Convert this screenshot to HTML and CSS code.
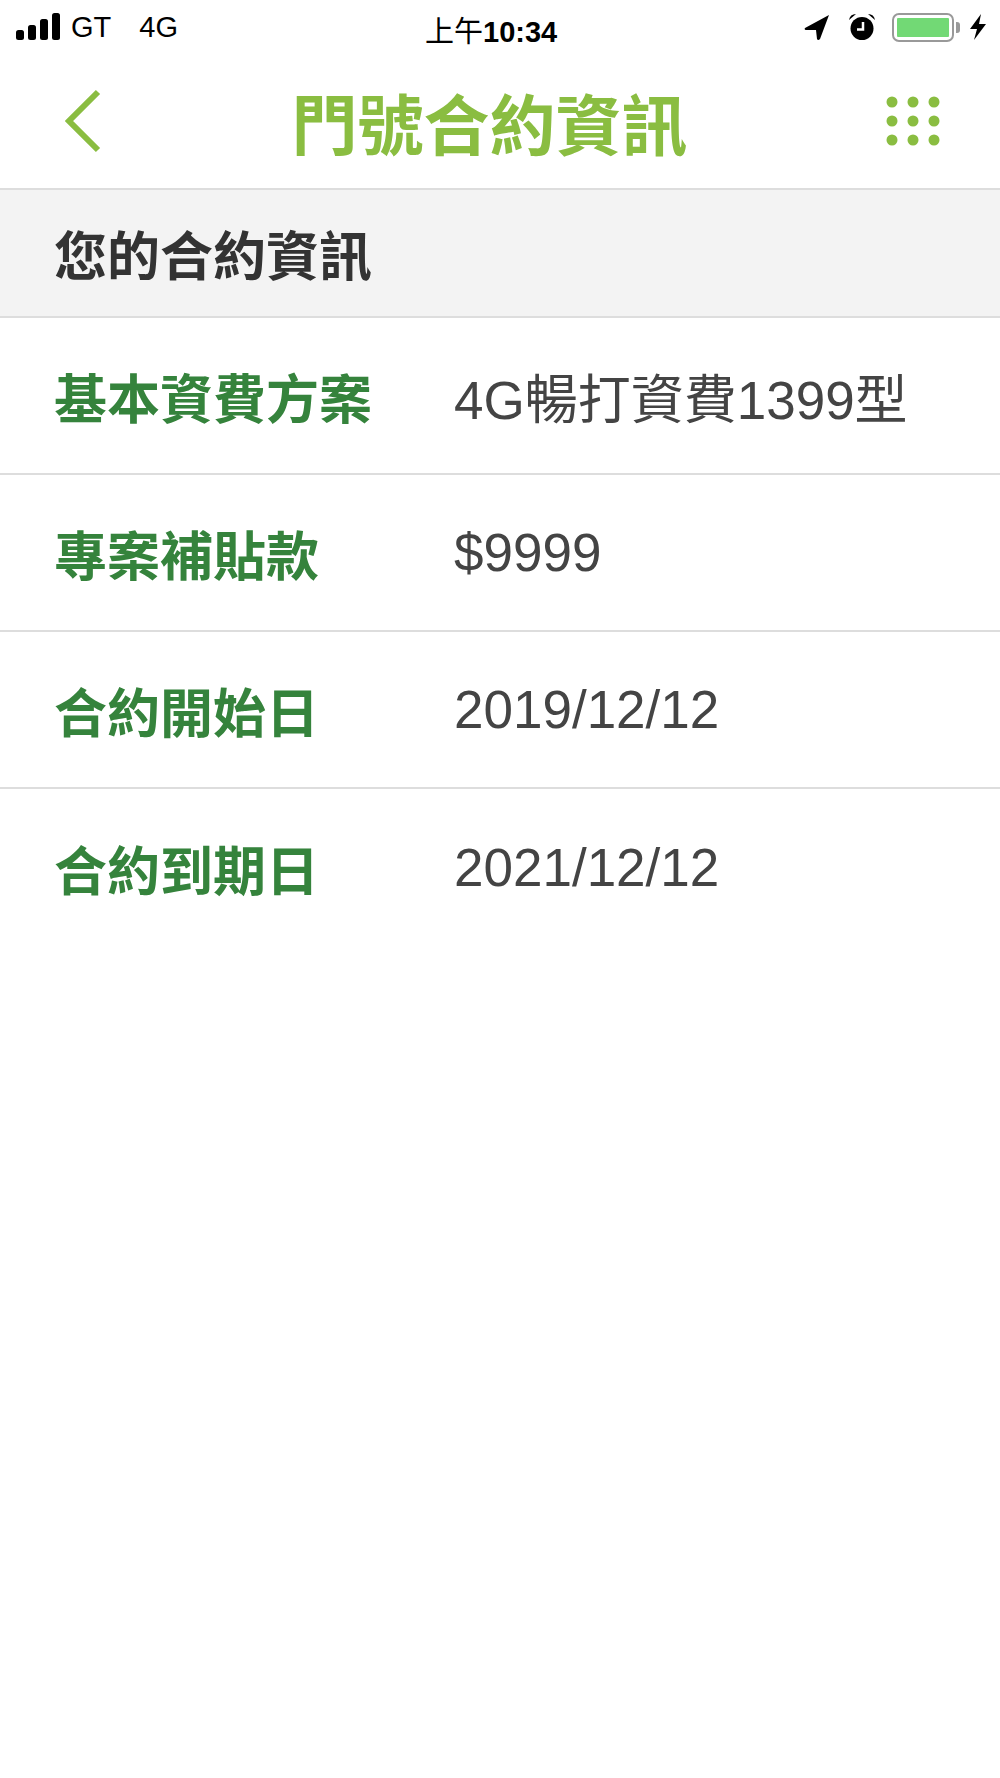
FILE: index.html
```html
<!DOCTYPE html>
<html lang="zh-TW">
<head>
  <meta charset="UTF-8">
  <title>門號合約資訊</title>
  <link rel="stylesheet" href="styles.css">
</head>
<body>

<div class="status-bar">
  <div class="status-left">
    <svg class="signal" width="46" height="28" viewBox="0 0 46 28">
      <rect x="0" y="17" width="8" height="10" rx="2.5"/>
      <rect x="12" y="12" width="8" height="15" rx="2.5"/>
      <rect x="24" y="6" width="8" height="21" rx="2.5"/>
      <rect x="36" y="0" width="8" height="27" rx="2.5"/>
    </svg>
    <span class="carrier">GT</span>
    <span class="network">4G</span>
  </div>
  <div class="status-time">上午<b>10:34</b></div>
  <div class="status-right">
    <svg width="26" height="26" viewBox="0 0 26 26">
      <path d="M25 1 L1 14 Q0 16 2 16 L12 16 L13 25 Q14 27 16 25 Z"/>
    </svg>
    <svg class="alarm" width="28" height="28" viewBox="0 0 28 28">
      <circle cx="14" cy="15.5" r="11.5"/>
      <path d="M1 7 Q2 1 8 1 Z M27 7 Q26 1 20 1 Z"/>
      <path class="hands" d="M15 9 V16.5 H9"/>
    </svg>
    <div class="battery">
      <div class="battery-body"><div class="battery-fill"></div></div>
      <div class="battery-cap"></div>
    </div>
    <svg width="16" height="26" viewBox="0 0 16 26">
      <path d="M11 0 L0 15 H7 L4 26 L16 10 H9 Z"/>
    </svg>
  </div>
</div>

<div class="nav-bar">
  <svg class="back" width="36" height="64" viewBox="0 0 36 64">
    <path d="M33 3 L4 32 L33 61"/>
  </svg>
  <h1>門號合約資訊</h1>
  <svg class="grid" width="56" height="50" viewBox="0 0 56 50">
    <circle cx="6" cy="6" r="5.5"/><circle cx="27" cy="6" r="5.5"/><circle cx="48" cy="6" r="5.5"/>
    <circle cx="6" cy="25" r="5.5"/><circle cx="27" cy="25" r="5.5"/><circle cx="48" cy="25" r="5.5"/>
    <circle cx="6" cy="44" r="5.5"/><circle cx="27" cy="44" r="5.5"/><circle cx="48" cy="44" r="5.5"/>
  </svg>
</div>

<div class="section-title">您的合約資訊</div>

<div class="info-row">
  <div class="info-label">基本資費方案</div>
  <div class="info-value">4G暢打資費1399型</div>
</div>
<div class="info-row">
  <div class="info-label">專案補貼款</div>
  <div class="info-value">$9999</div>
</div>
<div class="info-row">
  <div class="info-label">合約開始日</div>
  <div class="info-value">2019/12/12</div>
</div>
<div class="info-row no-border">
  <div class="info-label">合約到期日</div>
  <div class="info-value">2021/12/12</div>
</div>

</body>
</html>
```

FILE: styles.css
```css
body {
  margin: 0;
  background: #fff;
  font-family: 'Liberation Sans', 'Noto Sans CJK TC', sans-serif;
  color: #444;
}
.status-bar {
  height: 54px;
  display: flex;
  align-items: center;
  justify-content: space-between;
  padding: 0 14px 0 16px;
  color: #000;
  position: relative;
}
.status-left {
  display: flex;
  align-items: center;
  font-size: 29px;
}
.carrier {
  margin-left: 9px;
}
.network {
  margin-left: 28px;
}
.status-time {
  font-size: 29px;
  position: absolute;
  left: 425px;
  top: 8px;
}
.status-right {
  display: flex;
  align-items: center;
}
.alarm {
  margin-left: 18px;
}
.hands {
  fill: none;
  stroke: #fff;
  stroke-width: 2.5;
}
.battery {
  display: flex;
  align-items: center;
  margin-left: 16px;
  margin-right: 10px;
}
.battery-body {
  width: 62px;
  height: 29px;
  box-sizing: border-box;
  border: 2px solid #999;
  border-radius: 7px;
  padding: 3px;
}
.battery-fill {
  height: 100%;
  background: #72d975;
  border-radius: 1px;
}
.battery-cap {
  width: 4px;
  height: 11px;
  margin-left: 2px;
  background: #999;
  border-radius: 0 3px 3px 0;
}
.nav-bar {
  height: 136px;
  display: flex;
  align-items: center;
  justify-content: space-between;
  padding: 0 58px 0 65px;
  box-sizing: border-box;
  border-bottom: 2px solid #ddd;
}
.back {
  fill: none;
  stroke: #8abd41;
  stroke-width: 6;
}
.grid {
  fill: #8abd41;
}
.nav-bar h1 {
  margin: 0;
  font-size: 66px;
  font-weight: bold;
  color: #8abd41;
  margin-left: -8px;
}
.section-title {
  height: 128px;
  box-sizing: border-box;
  padding-left: 54px;
  display: flex;
  align-items: center;
  background: #f3f3f3;
  border-bottom: 2px solid #ddd;
  font-size: 53px;
  font-weight: bold;
  color: #333;
}
.info-row {
  height: 157px;
  box-sizing: border-box;
  padding-left: 54px;
  display: flex;
  align-items: center;
  border-bottom: 2px solid #ddd;
}
.no-border {
  border-bottom: none;
}
.info-label {
  width: 400px;
  font-size: 53px;
  font-weight: bold;
  color: #35833c;
}
.info-value {
  font-size: 53px;
  color: #444;
}
```
